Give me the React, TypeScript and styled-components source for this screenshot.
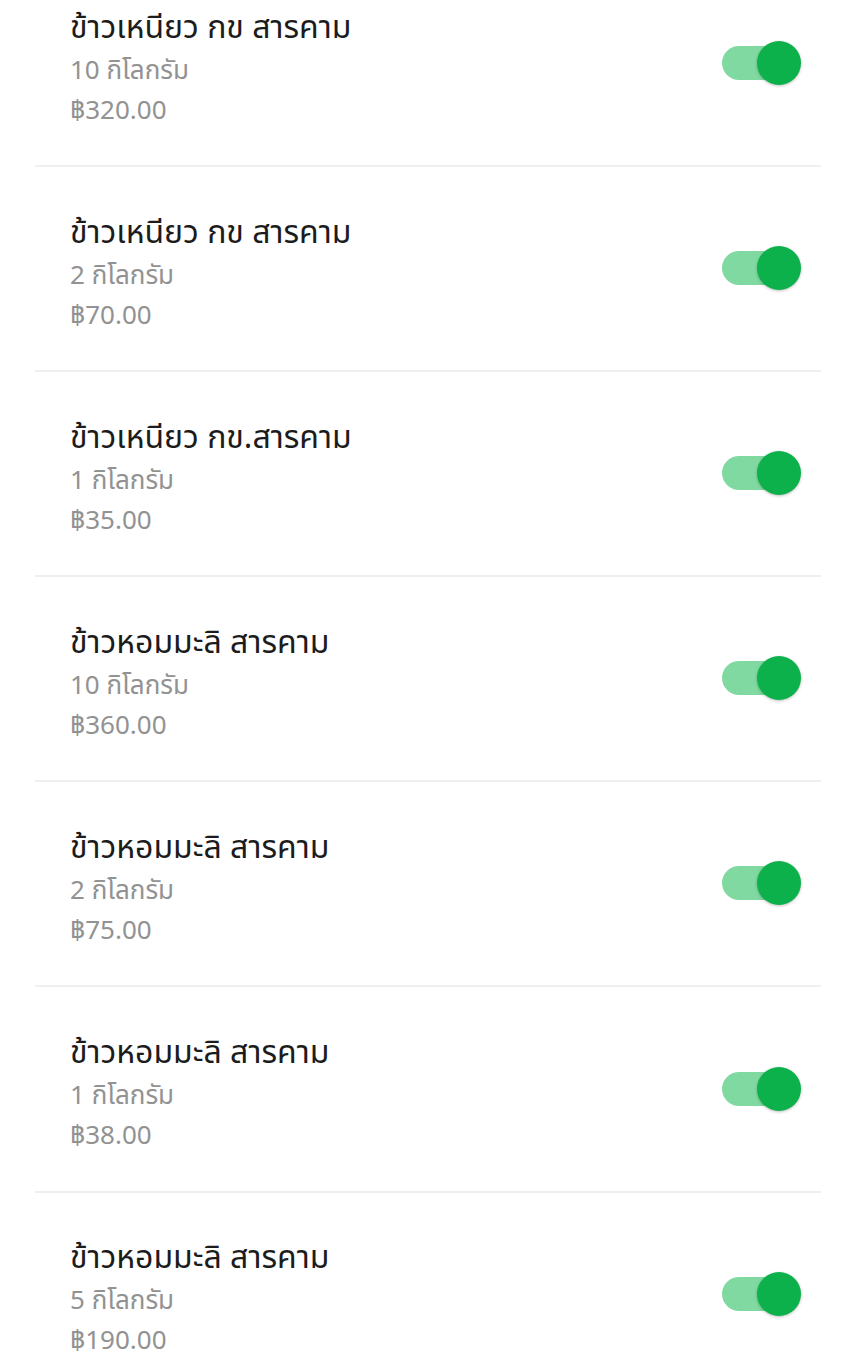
import React from "react";
import styled, { createGlobalStyle } from "styled-components";

const GlobalStyle = createGlobalStyle`
  html, body {
    margin: 0;
    padding: 0;
    background: #ffffff;
    overflow: hidden;
  }
  body {
    font-family: "Noto Sans", "Noto Sans Thai", "Noto Sans CJK SC", sans-serif;
  }
`;

const Page = styled.div`
  width: 856px;
  height: 1362px;
  overflow: hidden;
  background: #ffffff;
`;

const List = styled.div`
  margin-top: -38px;
  padding: 0 35px;
  display: flex;
  flex-direction: column;
`;

const Row = styled.div`
  height: 203.1px;
  border-bottom: 2px solid #efefef;
  display: flex;
  align-items: center;
  justify-content: space-between;
  padding: 0 21px 0 35px;
`;

const Info = styled.div`
  display: flex;
  flex-direction: column;
  margin-top: 7px;
`;

const Title = styled.div`
  font-size: 32px;
  line-height: 40px;
  color: #1c1c1c;
  margin-bottom: 3px;
`;

const Sub = styled.div`
  font-size: 26px;
  line-height: 40px;
  color: #929292;
`;

const Track = styled.div`
  position: relative;
  width: 64px;
  height: 34px;
  border-radius: 17px;
  background: #80d9a0;
  margin-right: 14px;
  margin-bottom: 1px;
`;

const Thumb = styled.div`
  position: absolute;
  top: 50%;
  left: 35px;
  width: 44px;
  height: 44px;
  margin-top: -22px;
  border-radius: 50%;
  background: #0cb14b;
  box-shadow: 0 1px 3px rgba(0, 0, 0, 0.25);
`;

type Item = { name: string; weight: string; price: string };

const items: Item[] = [
  { name: "ข้าวเหนียว กข สารคาม", weight: "10 กิโลกรัม", price: "฿320.00" },
  { name: "ข้าวเหนียว กข สารคาม", weight: "2 กิโลกรัม", price: "฿70.00" },
  { name: "ข้าวเหนียว กข.สารคาม", weight: "1 กิโลกรัม", price: "฿35.00" },
  { name: "ข้าวหอมมะลิ สารคาม", weight: "10 กิโลกรัม", price: "฿360.00" },
  { name: "ข้าวหอมมะลิ สารคาม", weight: "2 กิโลกรัม", price: "฿75.00" },
  { name: "ข้าวหอมมะลิ สารคาม", weight: "1 กิโลกรัม", price: "฿38.00" },
  { name: "ข้าวหอมมะลิ สารคาม", weight: "5 กิโลกรัม", price: "฿190.00" },
];

export default function App() {
  return (
    <Page>
      <GlobalStyle />
      <List>
        {items.map((it, i) => (
          <Row key={i}>
            <Info>
              <Title>{it.name}</Title>
              <Sub>{it.weight}</Sub>
              <Sub>{it.price}</Sub>
            </Info>
            <Track>
              <Thumb />
            </Track>
          </Row>
        ))}
      </List>
    </Page>
  );
}
